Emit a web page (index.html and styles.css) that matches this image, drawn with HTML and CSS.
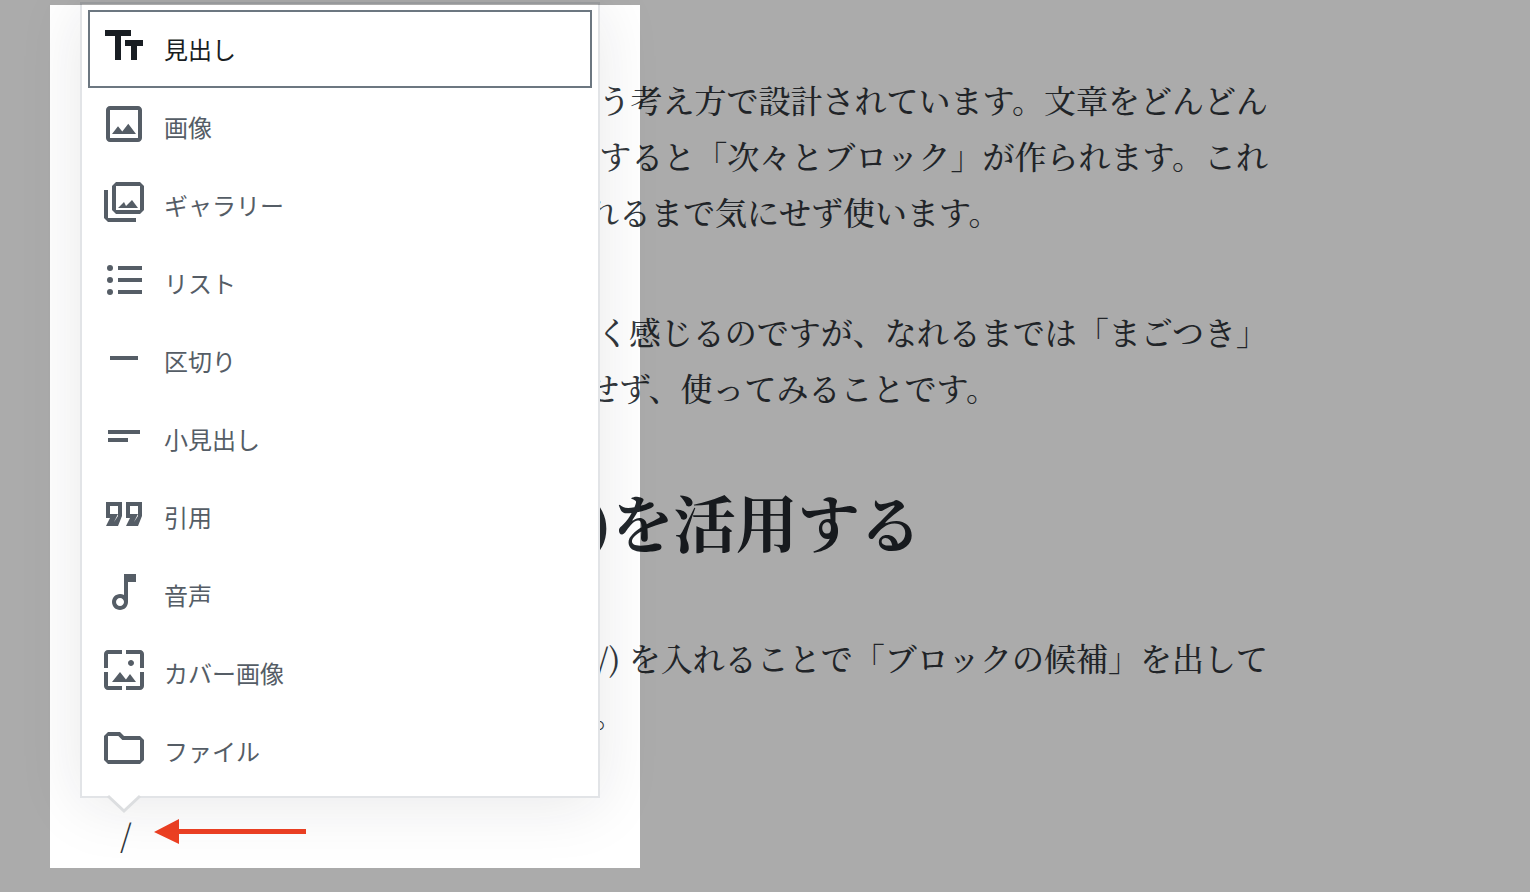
FILE: index.html
```html
<!DOCTYPE html>
<html lang="ja">
<head>
    <meta charset="UTF-8">
    <meta name="viewport" content="width=device-width, initial-scale=1.0">
    <title>ブロックの候補</title>
    <link rel="stylesheet" href="styles.css">
</head>
<body>
    <main class="editor">
        <p class="text">
            <span class="line">う考え方で設計されています。文章をどんどん</span>
            <span class="line">すると「次々とブロック」が作られます。これ</span>
            <span class="line last">れるまで気にせず使います。</span>
        </p>
        <p class="text">
            <span class="line">く感じるのですが、なれるまでは「まごつき」</span>
            <span class="line last">せず、使ってみることです。</span>
        </p>
        <h2 class="text">)を活用する</h2>
        <p class="text">
            <span class="line">/) を入れることで「ブロックの候補」を出して</span>
            <span class="line last">&thinsp;。</span>
        </p>

        <div class="prompt">
            <span>/</span>
            <!-- Arrow pointing at the slash -->
            <svg class="pointer" viewBox="0 0 152 26" aria-hidden="true">
                <path d="M0 13L25 0v10h127v5H25v10z"/>
            </svg>

            <!-- Block suggestions -->
            <div class="popover">
                <button type="button" class="item selected">
                    <svg class="icon" viewBox="0 0 24 24"><path d="M2.5 4v3h5v12h3V7h5V4h-13zm19 5h-9v3h3v7h3v-7h3V9z"/></svg>
                    見出し
                </button>
                <button type="button" class="item">
                    <svg class="icon" viewBox="0 0 24 24"><path d="M19 3H5c-1.1 0-2 .9-2 2v14c0 1.1.9 2 2 2h14c1.1 0 2-.9 2-2V5c0-1.1-.9-2-2-2zm0 16H5V5h14v14zm-4.86-7.14l-3 3.87L9 13.14 6 17h12l-3.86-5.14z"/></svg>
                    画像
                </button>
                <button type="button" class="item">
                    <svg class="icon" viewBox="0 0 24 24"><path d="M20 4v12H8V4h12m0-2H8L6 4v12l2 2h12l2-2V4l-2-2z"/><path d="M12 12l1 2 3-3 3 4H9z"/><path d="M2 6v14l2 2h14v-2H4V6H2z"/></svg>
                    ギャラリー
                </button>
                <button type="button" class="item">
                    <svg class="icon" viewBox="0 0 24 24"><path d="M9 19h12v-2H9v2zm0-6h12v-2H9v2zm0-8v2h12V5H9z"/><circle cx="5" cy="6" r="1.5"/><circle cx="5" cy="12" r="1.5"/><circle cx="5" cy="18" r="1.5"/></svg>
                    リスト
                </button>
                <button type="button" class="item">
                    <svg class="icon" viewBox="0 0 24 24"><path d="M5 11h14v2H5z"/></svg>
                    区切り
                </button>
                <button type="button" class="item">
                    <svg class="icon" viewBox="0 0 24 24"><path d="M4 9h16v2H4V9zm0 4h10v2H4v-2z"/></svg>
                    小見出し
                </button>
                <button type="button" class="item">
                    <svg class="icon" viewBox="0 0 24 24"><path d="M19 18h-6l2-4h-2V6h8v7l-2 5zm-2-2l2-3V8h-4v4h4l-2 4zm-8 2H3l2-4H3V6h8v7l-2 5zm-2-2l2-3V8H5v4h4l-2 4z"/></svg>
                    引用
                </button>
                <button type="button" class="item">
                    <svg class="icon" viewBox="0 0 24 24"><path d="M12 3l.01 10.55c-.59-.34-1.27-.55-2-.55C7.79 13 6 14.79 6 17s1.79 4 4.01 4S14 19.21 14 17V7h4V3h-6zm-1.99 16c-1.1 0-2-.9-2-2s.9-2 2-2 2 .9 2 2-.9 2-2 2z"/></svg>
                    音声
                </button>
                <button type="button" class="item">
                    <svg class="icon" viewBox="0 0 24 24"><path d="M4 4h7V2H4c-1.1 0-2 .9-2 2v7h2V4zm6 9l-4 5h12l-3-4-2.03 2.71L10 13zm7-4.5c0-.83-.67-1.5-1.5-1.5S14 7.67 14 8.5s.67 1.5 1.5 1.5S17 9.33 17 8.5zM20 2h-7v2h7v7h2V4c0-1.1-.9-2-2-2zm0 18h-7v2h7c1.1 0 2-.9 2-2v-7h-2v7zM4 13H2v7c0 1.1.9 2 2 2h7v-2H4v-7z"/></svg>
                    カバー画像
                </button>
                <button type="button" class="item">
                    <svg class="icon" viewBox="0 0 24 24"><path d="M9.17 6l2 2H20v10H4V6h5.17M10 4H4L2 6v12l2 2h16l2-2V8l-2-2h-8l-2-2z"/></svg>
                    ファイル
                </button>
                <svg class="tip" viewBox="0 0 32 18" aria-hidden="true">
                    <path class="tip-fill" d="M0 -2h32v2L16 16 0 0z"/>
                    <path class="tip-edge" d="M0 0l16 15L32 0"/>
                </svg>
            </div>
        </div>

        <div class="spotlight"></div>
    </main>
</body>
</html>
```

FILE: styles.css
```css
* {
    box-sizing: border-box;
}
body {
    margin: 0;
    background-color: #fff;
    color: #32373c;
    font-family: "Noto Serif CJK JP", "Noto Serif JP", "Noto Sans CJK JP", serif;
    font-size: 32px;
    font-weight: 500;
    line-height: 56px;
}
.editor {
    position: relative;
    min-height: 100vh;
    padding: 71px 262px 24px 120px;
    overflow: hidden;
}
.text {
    margin: 0 0 64px 467px;
}
.line {
    display: block;
    text-align: right;
    white-space: nowrap;
}
.last {
    text-align: left;
}
h2.text {
    font-size: 62px;
    font-weight: 700;
    line-height: 86px;
    white-space: nowrap;
    color: #23282d;
}
.prompt {
    position: relative;
    display: flex;
    align-items: center;
    gap: 22px;
}
.pointer {
    width: 152px;
    height: 26px;
    margin-top: -2px;
    fill: #ee4023;
}

/* suggestion list */
.popover {
    position: absolute;
    bottom: calc(100% + 7px);
    left: -40px;
    width: 520px;
    padding: 6px;
    background-color: #fff;
    border: 2px solid #e2e4e7;
    box-shadow: 0 6px 60px rgba(25, 30, 35, 0.1);
}
.item {
    display: flex;
    align-items: center;
    gap: 16px;
    width: 100%;
    height: 78px;
    padding: 0 10px;
    border: 2px solid transparent;
    background: none;
    color: #555d66;
    font-family: "Noto Sans CJK JP", sans-serif;
    font-size: 24px;
    line-height: 32px;
    text-align: left;
    cursor: pointer;
}
.item.selected {
    border-color: #6c7781;
    color: #191e23;
}
.icon {
    width: 48px;
    height: 48px;
    margin-bottom: 6px;
    fill: currentColor;
}
.tip {
    position: absolute;
    top: 100%;
    left: 26px;
    width: 32px;
    height: 18px;
    overflow: visible;
}
.tip-fill {
    fill: #fff;
}
.tip-edge {
    fill: none;
    stroke: #dcdee0;
    stroke-width: 3;
}

/* everything outside the frame is dimmed */
.spotlight {
    position: absolute;
    top: 5px;
    left: 50px;
    width: 590px;
    height: 863px;
    box-shadow: 0 0 0 200vmax rgba(0, 0, 0, 0.33);
    pointer-events: none;
}
```
